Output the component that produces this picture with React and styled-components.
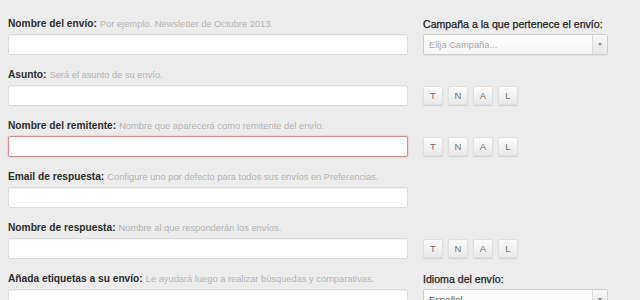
import React from "react";
import styled, { createGlobalStyle } from "styled-components";

const Global = createGlobalStyle`
  html, body { margin: 0; padding: 0; background: #ececec; }
  body { font-family: "Liberation Sans", Arial, sans-serif; }
`;

const Form = styled.div`
  padding: 17px 0 0 8px;
  width: 632px;
  box-sizing: border-box;
`;

const Row = styled.div`
  display: grid;
  grid-template-columns: 400px 185px;
  grid-template-rows: 14px 21px;
  column-gap: 15px;
  row-gap: 3px;
  height: 51px;
  box-sizing: border-box;
`;

const Label = styled.div`
  font-size: 10.2px;
  line-height: 14px;
  white-space: nowrap;
  color: #2c2c2c;
  font-weight: ${(p) => (p.$side ? 400 : 700)};
  ${(p) =>
    p.$side &&
    "font-size: 10.6px; color: #222; -webkit-text-stroke: 0.25px #222;"}
`;

const Hint = styled.span`
  font-weight: 400;
  font-size: 9.3px;
  color: #b4b4b4;
  margin-left: 3px;
`;

const Input = styled.div`
  box-sizing: border-box;
  height: 21px;
  background: #fff;
  border: 1px solid ${(p) => (p.$error ? "#e58585" : "#dcdcdc")};
  border-radius: 2px;
  box-shadow: ${(p) =>
    p.$error
      ? "0 0 2px rgba(230,110,110,0.5), inset 0 1px 1px rgba(0,0,0,0.04)"
      : "inset 0 1px 1px rgba(0,0,0,0.05)"};
`;

const Select = styled.div`
  box-sizing: border-box;
  height: 21px;
  display: flex;
  align-items: stretch;
  background: linear-gradient(#ffffff, #f6f6f6);
  border: 1px solid #cfcfcf;
  border-radius: 2px;
  box-shadow: 0 1px 1px rgba(0, 0, 0, 0.06);
`;

const SelectText = styled.div`
  flex: 1;
  display: flex;
  align-items: center;
  padding-left: 5px;
  font-size: 9.3px;
  color: ${(p) => (p.$placeholder ? "#a8a8a8" : "#555")};
`;

const SelectArrow = styled.div`
  width: 14px;
  border-left: 1px solid #dadada;
  background: linear-gradient(#f7f7f7, #e6e6e6);
  display: flex;
  align-items: center;
  justify-content: center;
  &::after {
    content: "";
    border-left: 2px solid transparent;
    border-right: 2px solid transparent;
    border-top: 3px solid #8a8a8a;
  }
`;

const Buttons = styled.div`
  display: flex;
  gap: 5px;
  padding-top: 1px;
`;

const Btn = styled.div`
  box-sizing: border-box;
  width: 20px;
  height: 19px;
  display: flex;
  align-items: center;
  justify-content: center;
  font-size: 9.5px;
  color: #707070;
  background: linear-gradient(#fbfbfb, #e9e9e9);
  border: 1px solid #e0e0e0;
  border-radius: 2px;
  box-shadow: 0 1px 1px rgba(0, 0, 0, 0.12);
`;

const Empty = styled.div``;

const Letters = () => (
  <Buttons>
    {["T", "N", "A", "L"].map((l) => (
      <Btn key={l}>{l}</Btn>
    ))}
  </Buttons>
);

const rows = [
  {
    label: "Nombre del envío:",
    hint: "Por ejemplo. Newsletter de Octubre 2013.",
    sideLabel: "Campaña a la que pertenece el envío:",
    side: (
      <Select>
        <SelectText $placeholder>Elija Campaña...</SelectText>
        <SelectArrow />
      </Select>
    ),
  },
  { label: "Asunto:", hint: "Será el asunto de su envío.", side: <Letters /> },
  {
    label: "Nombre del remitente:",
    hint: "Nombre que aparecerá como remitente del envío.",
    error: true,
    side: <Letters />,
  },
  {
    label: "Email de respuesta:",
    hint: "Configure uno por defecto para todos sus envíos en Preferencias.",
  },
  {
    label: "Nombre de respuesta:",
    hint: "Nombre al que responderán los envíos.",
    side: <Letters />,
  },
  {
    label: "Añada etiquetas a su envío:",
    hint: "Le ayudará luego a realizar búsquedas y comparativas.",
    sideLabel: "Idioma del envío:",
    side: (
      <Select>
        <SelectText>Español</SelectText>
        <SelectArrow />
      </Select>
    ),
  },
];

export default function App() {
  return (
    <>
      <Global />
      <Form>
        {rows.map((r) => (
          <Row key={r.label}>
            <Label>
              {r.label}
              <Hint>{r.hint}</Hint>
            </Label>
            {r.sideLabel ? <Label $side>{r.sideLabel}</Label> : <Empty />}
            <Input $error={r.error} />
            {r.side || <Empty />}
          </Row>
        ))}
      </Form>
    </>
  );
}
